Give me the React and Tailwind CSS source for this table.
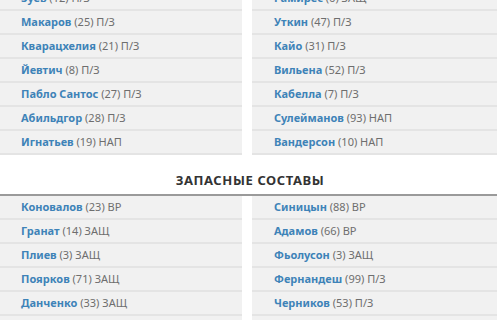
import React from "react";

const starters = [
  [["Зуев", "12", "П/З"], ["Рамирес", "6", "ЗАЩ"]],
  [["Макаров", "25", "П/З"], ["Уткин", "47", "П/З"]],
  [["Кварацхелия", "21", "П/З"], ["Кайо", "31", "П/З"]],
  [["Йевтич", "8", "П/З"], ["Вильена", "52", "П/З"]],
  [["Пабло Сантос", "27", "П/З"], ["Кабелла", "7", "П/З"]],
  [["Абильдгор", "28", "П/З"], ["Сулейманов", "93", "НАП"]],
  [["Игнатьев", "19", "НАП"], ["Вандерсон", "10", "НАП"]],
];

const subs = [
  [["Коновалов", "23", "ВР"], ["Синицын", "88", "ВР"]],
  [["Гранат", "14", "ЗАЩ"], ["Адамов", "66", "ВР"]],
  [["Плиев", "3", "ЗАЩ"], ["Фьолусон", "3", "ЗАЩ"]],
  [["Поярков", "71", "ЗАЩ"], ["Фернандеш", "99", "П/З"]],
  [["Данченко", "33", "ЗАЩ"], ["Черников", "53", "П/З"]],
  [["", "", ""], ["", "", ""]],
];

function Cell({ p, right }) {
  return (
    <div
      className={`h-[24px] flex items-center bg-[#f1f1f1] border-b-2 border-[#e4e4e4] ${
        right ? "pl-[22px]" : "pl-[21px]"
      } text-[11px] whitespace-nowrap`}
    >
      {p[0] && (
        <>
          <span className="font-bold text-[#3e83b8]">{p[0]}</span>
          <span className="text-[#6e6e6e]">&nbsp;({p[1]}) {p[2]}</span>
        </>
      )}
    </div>
  );
}

function Table({ rows }) {
  return (
    <div className="flex gap-[10px] w-[497px]">
      <div className="w-[242px] flex flex-col">
        {rows.map((r, i) => (
          <Cell key={i} p={r[0]} />
        ))}
      </div>
      <div className="flex-1 flex flex-col">
        {rows.map((r, i) => (
          <Cell key={i} p={r[1]} right />
        ))}
      </div>
    </div>
  );
}

export default function App() {
  return (
    <div
      className="w-[500px] h-[320px] overflow-hidden bg-white"
      style={{ fontFamily: '"Noto Sans", "Open Sans", sans-serif' }}
    >
      <div className="-mt-[13px]">
        <Table rows={starters} />
        <div className="h-[19px]" />
        <div className="text-center font-bold text-[13px] text-[#333] tracking-[0.6px] leading-none pb-[7px]">
          ЗАПАСНЫЕ СОСТАВЫ
        </div>
        <div className="w-[497px] h-[2px] bg-[#9a9a9a]" />
        <Table rows={subs} />
      </div>
    </div>
  );
}
